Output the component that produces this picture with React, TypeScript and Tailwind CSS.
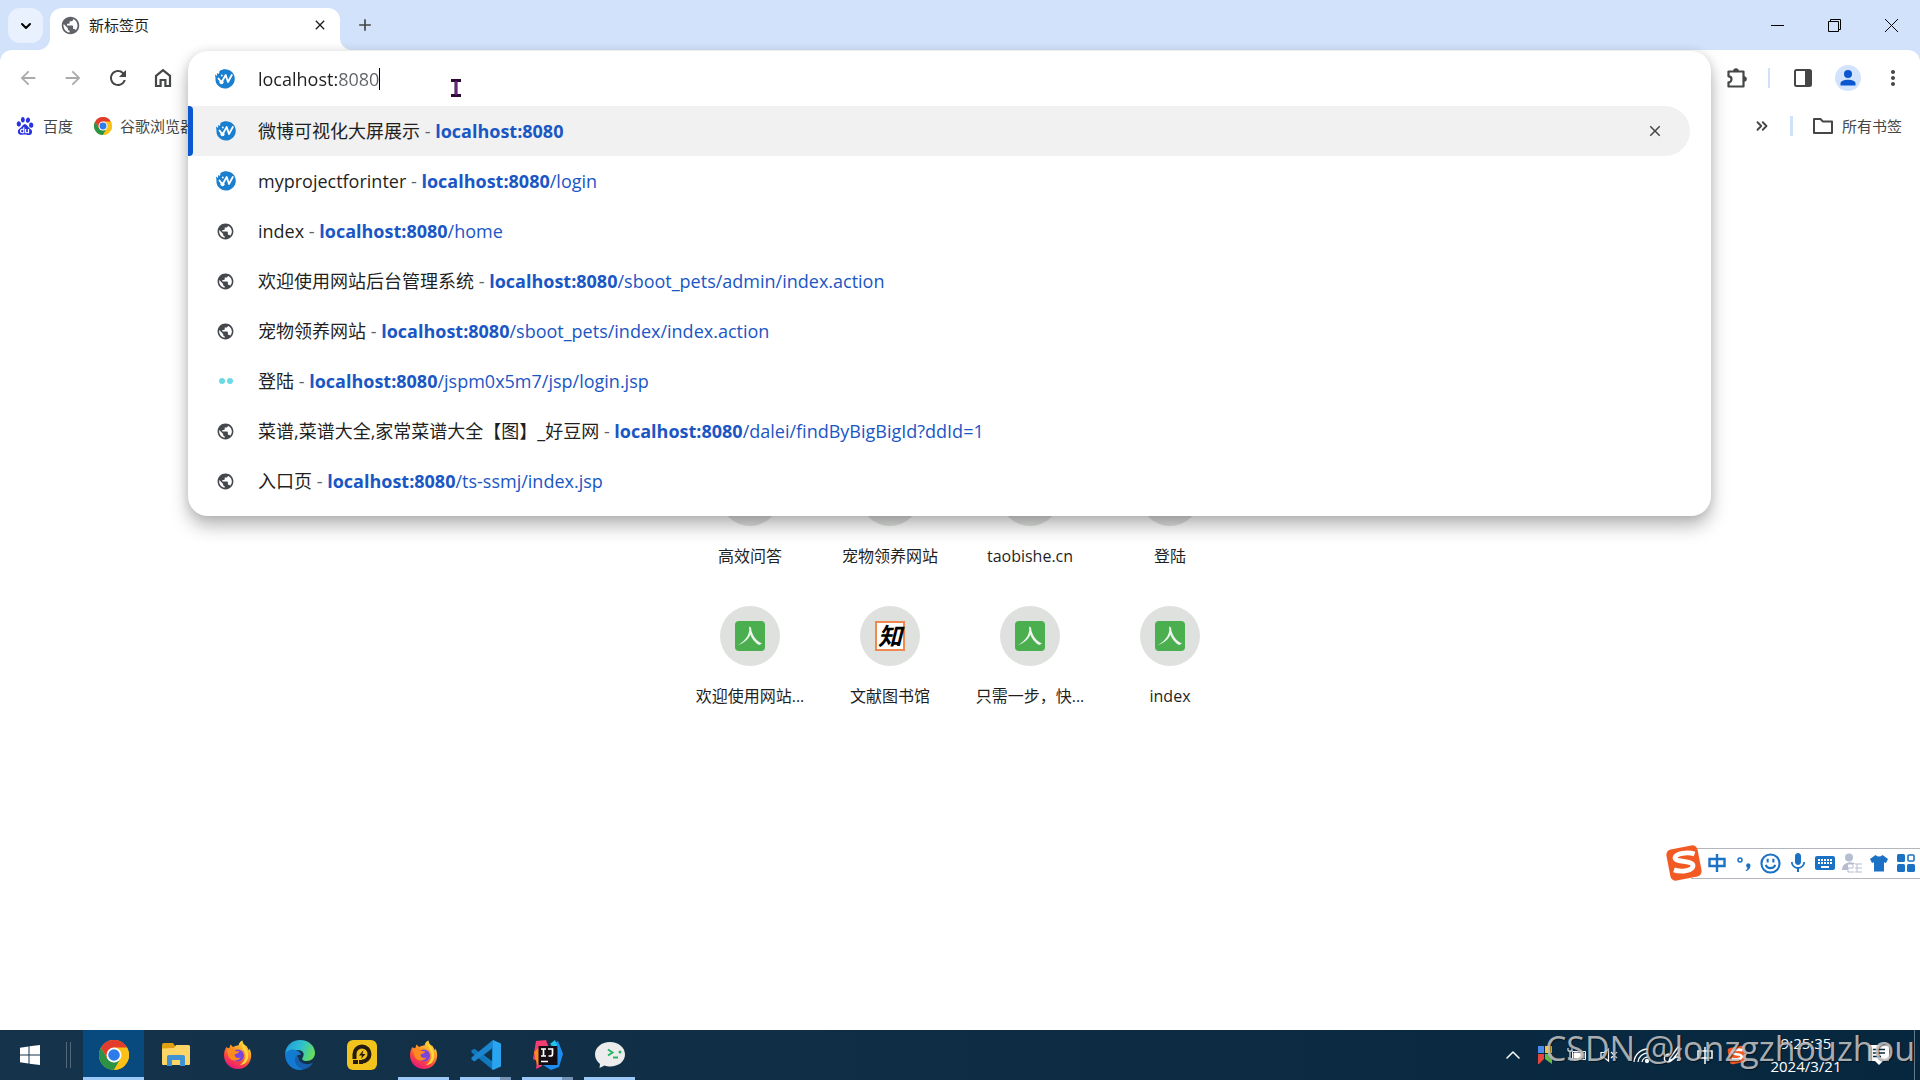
import type { ReactNode } from 'react';
import { MdArrowBack, MdArrowForward, MdAdd, MdClose, MdKeyboard, MdMic, MdMoreVert, MdPublic, MdRefresh } from 'react-icons/md';
import { SiBaidu } from 'react-icons/si';
import { ChevronDown, ChevronUp, ChevronsRight } from 'lucide-react';

const ChromeIcon = ({ className }: { className: string }) => (
  <svg viewBox="0 0 48 48" className={className}>
    <circle cx="24" cy="24" r="24" fill="#fbc116" />
    <path d="M3.2 12L13.6 30 24 36 34.4 30 24 48A24 24 0 0 1 3.2 12z" fill="#2b9246" />
    <path d="M24 12h20.8A24 24 0 0 1 24 48l10.4-18z" fill="#fbc116" />
    <path d="M3.2 12A24 24 0 0 1 44.8 12H24L13.6 30z" fill="#e33b2e" />
    <circle cx="24" cy="24" r="12" fill="#fff" />
    <circle cx="24" cy="24" r="9.3" fill="#2e7bea" />
  </svg>
);

const WeiboIcon = () => (
  <svg viewBox="0 0 20 20" className="size-5">
    <path d="M4.500 2C8-.5 13.500-.5 17 3c4 4 3.600 10.500-.5 14-4 3.600-10 3.300-13.500-.4C1 14.500 .2 12 .5 9.500L0 5.500l2 1.500.2-3 1.800 1z" fill="#1b7fd0" />
    <path d="M3.500 9.500L6.500 13.500 10.700 6 13 13 16.800 6" fill="none" stroke="#fff" strokeWidth="1.800" strokeLinejoin="round" strokeLinecap="round" />
    <circle cx="6.500" cy="13.200" r="2" fill="#fff" />
    <circle cx="6.800" cy="6.500" r=".9" fill="#fff" />
  </svg>
);

const GlobeIcon = () => <MdPublic className="size-[19px] text-[#45484c]" />;

const DotsIcon = () => (
  <svg viewBox="0 0 20 20" className="size-5">
    <circle cx="6" cy="10" r="3" fill="#6adbe5" />
    <circle cx="14" cy="10" r="3" fill="#6adbe5" />
  </svg>
);

const SogouIcon = ({ className }: { className: string }) => (
  <svg viewBox="0 0 36 36" className={className}>
    <rect x="3" y="3" width="30" height="30" rx="5" fill="#f15a22" transform="rotate(-11 18 18)" />
    <path d="M28 9.500C21 7 10 9 9.500 13c0 4.500 17 2.500 17 7.500 0 4.500-11 6.500-18 4" fill="none" stroke="#fff" strokeWidth="4.600" />
  </svg>
);

const HomeIcon = () => (
  <svg viewBox="0 0 20 20" className="size-5" fill="none" stroke="#444746" strokeWidth="2.200">
    <path d="M3 7.800L10 2.200l7 5.600V18h-4.600v-6H7.600v6H3z" />
  </svg>
);

const PuzzleIcon = () => (
  <svg viewBox="0 0 22 22" className="size-[22px]">
    <path d="M2.500 4.500h15v15h-15v-4.200a3 3 0 0 0 0-6z" fill="none" stroke="#444746" strokeWidth="2.200" strokeLinejoin="round" />
    <path d="M7.200 4a2.800 2.800 0 0 1 5.600 0zM18 9.200a2.800 2.800 0 0 1 0 5.600z" fill="#444746" />
  </svg>
);

const SidePanelIcon = () => (
  <svg viewBox="0 0 20 20" className="size-5">
    <rect x="2" y="2" width="16" height="16" rx="1.500" fill="none" stroke="#444746" strokeWidth="2" />
    <path d="M12 2h6v16h-6z" fill="#444746" />
  </svg>
);

const FolderIcon = () => (
  <svg viewBox="0 0 22 18" className="h-[18px] w-[22px]" fill="none" stroke="#444746" strokeWidth="2" strokeLinejoin="round">
    <path d="M2 2h6.500l2.500 2.600h9V16H2z" />
  </svg>
);

const FileExplorerIcon = () => (
  <svg viewBox="0 0 30 30" className="size-[30px]">
    <path d="M1 5q0-2 2-2h9l2 3v3H1z" fill="#e0a010" />
    <path d="M1 8.500l12-.5 2-3h12.500q1.500 0 1.500 1.500V24q0 1-1 1H2q-1 0-1-1z" fill="#fdd667" />
    <path d="M6 26V17q0-2 2-2h14q2 0 2 2v9h-5v-6h-8v6z" fill="#3f93d2" />
  </svg>
);

const FirefoxIcon = () => (
  <svg viewBox="0 0 30 30" className="size-[30px]">
    <defs>
      <linearGradient id="fx" x1=".8" y1="0" x2=".3" y2="1">
        <stop offset="0" stopColor="#ffe93c" />
        <stop offset=".4" stopColor="#ff9527" />
        <stop offset=".7" stopColor="#fb4343" />
        <stop offset="1" stopColor="#e51580" />
      </linearGradient>
    </defs>
    <path d="M3.500 7L6 9l1.500-4.500L10 7q3-2 5.500-1.500C16 2.500 18 1 19.500.5c0 3 2 4.500 4 5.500l2.500 4.500.5-2c1.500 3 2 6 1.500 9C27 24.500 21.500 29 15 29 7 29 1 23 1 15c0-3 1-6 2.500-8z" fill="url(#fx)" />
    <path d="M19 4c4 3 7 8 6 14-1 5-5 7-8 7 6-4 7-11 3-16z" fill="#ffd83a" />
    <circle cx="15" cy="15.500" r="6" fill="#7a45dc" />
    <path d="M3.500 9C7 7 11 8.500 12.500 11l4 .5c-1 2-3.500 2-5 3 0 3 3 4 6 3-2 4-10 4-12-1z" fill="#ff8a1f" />
  </svg>
);

const EdgeIcon = () => (
  <svg viewBox="0 0 30 30" className="size-[30px]">
    <defs>
      <linearGradient id="edge" x1="0" y1=".3" x2="1" y2=".6">
        <stop offset="0" stopColor="#239cdc" />
        <stop offset=".5" stopColor="#2fc0cf" />
        <stop offset="1" stopColor="#68df54" />
      </linearGradient>
    </defs>
    <path d="M0 14C1 5 7.500 0 15 0c9 0 15 6 15 13 0 5-4 8-8.500 8-3.500 0-5-1.500-4-3 3-5 0-8-5-8C7 10 2 12 0 14z" fill="url(#edge)" />
    <path d="M0 14c2-4 7-5.500 11-4 3 1 5 3 5 5-3-1-6 2-5 6 1 5 5 7 8 8.500C8 32 0 24 0 14z" fill="#127bd1" />
    <path d="M11.500 15c-4 6 0 13 7.500 14.300 4-1 7-3 9-6.500-5 3-14 1-14.500-5z" fill="#155fae" />
  </svg>
);

const PlayerIcon = () => (
  <svg viewBox="0 0 30 30" className="size-[30px]">
    <rect width="30" height="30" rx="6" fill="#f2c31d" />
    <path d="M7.500 19v-5a7.500 7.500 0 1 1 7.500 7.500" fill="none" stroke="#241c10" strokeWidth="4" />
    <path d="M6 20h5v4H6zM12 20h4v4h-4zM16.500 10L12 15.500h3l-1 3.500 4.500-5h-3z" fill="#241c10" />
  </svg>
);

const CodeIcon = () => (
  <svg viewBox="0 0 30 30" className="size-[30px]">
    <path d="M22 0L8.500 12.500 3.500 8.700.5 10.200v2.300L22 30z" fill="#1178bd" />
    <path d="M.5 19.500l3 2L22 7V0L.5 17.500z" fill="#1b86cf" />
    <path d="M22 0l8 3.500v23L22 30l-1-1V8.500L12 15l9 7v7z" fill="#2aa4ee" />
    <path d="M21 8.500L12.500 15l8.500 6.500z" fill="#12334a" />
  </svg>
);

const IdeaIcon = () => (
  <svg viewBox="0 0 30 30" className="size-[30px]">
    <path d="M3 1l10-1 3 8-7 18-6 3 1-8-4-2z" fill="#f33d72" />
    <path d="M1 12l7-6 2 17-6 2z" fill="#fb8a25" />
    <path d="M18 5l7-4 5 13-4 13-8 3-8-5z" fill="#1d8cf0" />
    <path d="M17 4l5-4 4 10z" fill="#21c6e8" />
    <rect x="5.500" y="6" width="19" height="19" fill="#140d14" />
    <path d="M8 9h5M10.500 9v7M8 16h5M15 9h4.500v5q0 2-2 2h-2M8 21.500h7" fill="none" stroke="#fff" strokeWidth="1.700" />
  </svg>
);

const WechatDevIcon = () => (
  <svg viewBox="0 0 30 30" className="size-[30px]">
    <path d="M15 2C6.500 2 0 7.500 0 14.500c0 4 2 7 5 9.500L4.500 28l5-2.500c2 .6 3.500 1 5.500 1 8.500 0 15-5 15-12S23.500 2 15 2z" fill="#ececec" />
    <path d="M13 9.500l4.500 3-4.500 3M18 17.500h5" fill="none" stroke="#27b565" strokeWidth="2" />
    <circle cx="25" cy="12" r="1.500" fill="#27b565" />
  </svg>
);

type Suggestion = { title: string; path: string; icon: ReactNode; selected?: boolean };

const suggestions: Suggestion[] = [
  { title: '微博可视化大屏展示', path: '', icon: <WeiboIcon />, selected: true },
  { title: 'myprojectforinter', path: '/login', icon: <WeiboIcon /> },
  { title: 'index', path: '/home', icon: <GlobeIcon /> },
  { title: '欢迎使用网站后台管理系统', path: '/sboot_pets/admin/index.action', icon: <GlobeIcon /> },
  { title: '宠物领养网站', path: '/sboot_pets/index/index.action', icon: <GlobeIcon /> },
  { title: '登陆', path: '/jspm0x5m7/jsp/login.jsp', icon: <DotsIcon /> },
  { title: '菜谱,菜谱大全,家常菜谱大全【图】_好豆网', path: '/dalei/findByBigBigId?ddId=1', icon: <GlobeIcon /> },
  { title: '入口页', path: '/ts-ssmj/index.jsp', icon: <GlobeIcon /> },
];

const RenIcon = () => (
  <svg viewBox="0 0 30 30" className="size-[30px]">
    <rect width="30" height="30" rx="4" fill="#4bae4f" />
    <path d="M14 5.500c1.500 7-3 14-11 18.500C9 22 14 18 15.300 13.500 17 18.500 21 22.500 24 24l3-1.500c-5-2-10.500-8-11-16z" fill="#eef3ee" />
  </svg>
);

const ZhiIcon = () => (
  <span className="flex size-[30px] items-center justify-center border-2 border-[#ef8a4e] bg-white text-2xl leading-none font-bold text-black italic">
    知
  </span>
);

const shortcuts = [
  { label: '高效问答', icon: null },
  { label: '宠物领养网站', icon: null },
  { label: 'taobishe.cn', icon: null },
  { label: '登陆', icon: null },
  { label: '欢迎使用网站...', icon: <RenIcon /> },
  { label: '文献图书馆', icon: <ZhiIcon /> },
  { label: '只需一步，快...', icon: <RenIcon /> },
  { label: 'index', icon: <RenIcon /> },
];

function TabStrip() {
  return (
    <header className="flex h-[50px] shrink-0 items-start bg-[#d3e2fb] pt-2">
      <button aria-label="Search tabs" className="ml-2 flex size-[35px] items-center justify-center rounded-xl bg-[#e9f1fe]">
        <ChevronDown className="size-4" strokeWidth={3} />
      </button>
      <div className="relative ml-[7px] flex h-[42px] w-[290px] items-center rounded-t-xl bg-white pr-3 pb-2 pl-[10px]">
        <svg viewBox="0 0 12 12" className="absolute bottom-0 -left-3 size-3 fill-white"><path d="M12 0v12H0A12 12 0 0 0 12 0z" /></svg>
        <svg viewBox="0 0 12 12" className="absolute -right-3 bottom-0 size-3 fill-white"><path d="M0 0v12h12A12 12 0 0 1 0 0z" /></svg>
        <MdPublic className="size-[21px] text-[#5f6368]" />
        <span className="ml-2 flex-1 text-[15px] text-[#1f1f1f]">新标签页</span>
        <button aria-label="Close tab"><MdClose className="size-4 text-[#1f1f1f]" /></button>
      </div>
      <button aria-label="New tab" className="ml-[15px] flex h-[34px] w-5 items-center justify-center">
        <MdAdd className="size-5 shrink-0 text-[#444746]" />
      </button>
      <div className="ml-auto flex h-[34px]">
        <button aria-label="Minimize" className="flex w-[57px] items-center justify-center"><span className="h-px w-[13px] bg-black" /></button>
        <button aria-label="Restore" className="flex w-[57px] items-center justify-center">
          <svg viewBox="0 0 13 13" className="size-[13px]" fill="none" stroke="#000"><path d="M.5 2.500h10v10H.5zM2.500 2.500v-2h10v10h-2" /></svg>
        </button>
        <button aria-label="Close" className="flex w-[57px] items-center justify-center">
          <svg viewBox="0 0 13 13" className="size-[13px]" stroke="#000"><path d="M0 0l13 13M13 0L0 13" /></svg>
        </button>
      </div>
    </header>
  );
}

function SuggestionRow({ title, path, icon, selected }: Suggestion) {
  return (
    <li className={`relative mr-[21px] flex h-[50px] items-center rounded-r-full pr-[26px] ${selected ? 'bg-[#f1f1f1]' : ''}`}>
      {selected && <span className="absolute inset-y-0 left-0 w-[5px] rounded-r bg-[#0b57d0]" />}
      <a href={`http://localhost:8080${path}`} className="flex flex-1 items-center text-lg whitespace-pre text-[#1f1f1f]">
        <span className="ml-7 flex w-[42px] items-center">{icon}</span>
        <span>{title}</span>
        <span className="text-[#5f6368]"> - </span>
        <span className="text-[#1a56c4]"><b className="font-bold">localhost:8080</b>{path}</span>
      </a>
      {selected && <button aria-label="Remove suggestion"><MdClose className="size-[18px] text-[#444746]" /></button>}
    </li>
  );
}

function Omnibox() {
  return (
    <div className="relative h-full flex-1">
      <div className="absolute inset-x-0 top-px z-10 rounded-[20px] bg-white pb-[10px] shadow-[0_10px_18px_rgba(0,0,0,0.28),0_0_10px_rgba(0,0,0,0.1)]">
        <label className="flex h-[55px] items-center pl-[27px]">
          <WeiboIcon />
          <input
            aria-label="Address and search bar"
            defaultValue="localhost:8080"
            className="ml-[23px] field-sizing-content bg-[linear-gradient(90deg,#1f1f1f_80px,#5f6368_80px)] bg-clip-text text-lg text-transparent outline-none"
          />
          <span className="h-[22px] w-px bg-black" />
        </label>
        <ul>
          {suggestions.map((item) => <SuggestionRow key={item.title} {...item} />)}
        </ul>
        {/* Text cursor */}
        <svg viewBox="0 0 12 18" className="absolute top-7 left-[262px] h-[18px] w-3" fill="none">
          <path d="M1 1.500h10M6 1.500v15M1 16.500h10" stroke="#2b0a35" strokeWidth="3" />
          <path d="M6 2v14" stroke="#a13ac4" strokeWidth="1" />
        </svg>
      </div>
    </div>
  );
}

function Toolbar() {
  return (
    <div className="flex h-14 items-center">
      <nav className="flex w-[188px] pl-[5px]">
        <button aria-label="Back" className="flex w-[45px] items-center justify-center"><MdArrowBack className="size-[22px] text-[#a8aaac]" /></button>
        <button aria-label="Forward" className="flex w-[45px] items-center justify-center"><MdArrowForward className="size-[22px] text-[#a8aaac]" /></button>
        <button aria-label="Reload" className="flex w-[45px] items-center justify-center"><MdRefresh className="size-6 text-[#444746]" /></button>
        <button aria-label="Home" className="flex w-[45px] items-center justify-center"><HomeIcon /></button>
      </nav>
      <Omnibox />
      <div className="flex w-[209px] items-center justify-end pr-[5px]">
        <button aria-label="Extensions" className="flex w-[45px] items-center justify-center"><PuzzleIcon /></button>
        <span className="mr-[10px] ml-[9px] h-5 w-0.5 bg-[#d0e1fd]" />
        <button aria-label="Side panel" className="flex w-[45px] items-center justify-center"><SidePanelIcon /></button>
        <button aria-label="Profile" className="flex w-[45px] items-center justify-center">
          <svg viewBox="0 0 26 26" className="size-[26px]">
            <circle cx="13" cy="13" r="13" fill="#d3e3fd" />
            <circle cx="13" cy="9" r="4" fill="#0b57d0" />
            <path d="M5.500 20.500v-2c0-5 15-5 15 0v2z" fill="#0b57d0" />
          </svg>
        </button>
        <button aria-label="Menu" className="flex w-[45px] items-center justify-center"><MdMoreVert className="size-6 text-[#444746]" /></button>
      </div>
    </div>
  );
}

function BookmarksBar() {
  return (
    <nav className="flex h-10 items-center pr-[18px] pl-4 text-[15px] text-[#444746]">
      <a href="#baidu" className="flex items-center">
        <SiBaidu className="size-[18px] text-[#2932e1]" />
        <span className="ml-[9px]">百度</span>
      </a>
      <a href="#chrome" className="ml-[21px] flex items-center">
        <ChromeIcon className="size-[18px]" />
        <span className="ml-2">谷歌浏览器</span>
      </a>
      <button aria-label="More bookmarks" className="ml-auto"><ChevronsRight className="size-[18px]" strokeWidth={2.5} /></button>
      <span className="mx-[19px] h-5 w-[3px] bg-[#d0e1fd]" />
      <button className="flex items-center gap-2"><FolderIcon />所有书签</button>
    </nav>
  );
}

function Shortcuts() {
  return (
    <main className="flex flex-1 justify-center pt-80">
      <div className="grid h-[280px] grid-cols-[repeat(4,140px)]">
        {shortcuts.map(({ label, icon }) => (
          <a key={label} href="#site" className="flex h-[140px] flex-col items-center text-base text-[#1f1f1f]">
            <span className="flex size-[60px] items-center justify-center rounded-full bg-[#dfe1df]">{icon}</span>
            <span className="mt-[18px] leading-6">{label}</span>
          </a>
        ))}
      </div>
    </main>
  );
}

function ImeBar() {
  return (
    <div className="absolute right-0 bottom-[200px] flex h-[34px] items-center text-[#1b72c4]">
      <SogouIcon className="z-10 size-[38px]" />
      <div className="-ml-3 flex h-[31px] items-center border-y border-[#b4b6bd] bg-white pr-px pl-3">
        <span className="flex w-[27px] justify-center">
          <svg viewBox="0 0 18 18" className="size-[18px]" fill="none" stroke="currentColor" strokeWidth="2.400"><path d="M1.500 5h15v7h-15zM9 0v18" /></svg>
        </span>
        <span className="flex w-[27px] justify-center">
          <svg viewBox="0 0 16 16" className="size-4" fill="currentColor"><circle cx="4" cy="5" r="2" fill="none" stroke="currentColor" strokeWidth="1.500" /><path d="M9.500 15.500c1.500-1 2-2 1.800-3a2.200 2.200 0 1 1 3.200-2.200c0 3-2 5-4.500 6z" /></svg>
        </span>
        <span className="flex w-[27px] justify-center">
          <svg viewBox="0 0 22 22" className="size-[21px]" fill="none" stroke="currentColor" strokeWidth="2.200"><circle cx="11" cy="11" r="9.500" /><path d="M8 6v4M14 6v4M6 12.500c1.500 4.500 8.500 4.500 10 0" /></svg>
        </span>
        <span className="flex w-[27px] justify-center"><MdMic className="size-6" /></span>
        <span className="flex w-[27px] justify-center"><MdKeyboard className="size-6" /></span>
        <span className="flex w-[27px] justify-center">
          <svg viewBox="0 0 22 20" className="h-5 w-[22px] text-[#b5bdd0]"><circle cx="8" cy="4.500" r="4" fill="currentColor" /><path d="M1 17c0-9 12-9 13-6H7v6z" fill="currentColor" /><path d="M7 11h5v4H7v4h6M14 11h7M14 15h7M14 19h7M16 11v8" fill="none" stroke="currentColor" /></svg>
        </span>
        <span className="flex w-[27px] justify-center">
          <svg viewBox="0 0 18 18" className="size-[18px] fill-current"><path d="M5.500 1q3.500 3 7 0l5.500 4-2 4-2-.8V17.500H4V8.200L2 9 0 5z" /></svg>
        </span>
        <span className="flex w-[27px] justify-center">
          <svg viewBox="0 0 18 18" className="size-[18px] fill-current"><rect width="8" height="8" rx="1.500" /><rect y="10" width="8" height="8" rx="1.500" /><rect x="10" y="10" width="8" height="8" rx="1.500" /><rect x="11" y="1" width="6" height="6" rx="1" fill="none" stroke="currentColor" strokeWidth="1.600" /></svg>
        </span>
      </div>
    </div>
  );
}

const taskbarApps = [
  { name: 'Chrome', icon: <ChromeIcon className="size-[30px]" />, state: 'active' },
  { name: 'File Explorer', icon: <FileExplorerIcon />, state: 'idle' },
  { name: 'Firefox', icon: <FirefoxIcon />, state: 'idle' },
  { name: 'Edge', icon: <EdgeIcon />, state: 'idle' },
  { name: 'Player', icon: <PlayerIcon />, state: 'idle' },
  { name: 'Firefox Developer', icon: <FirefoxIcon />, state: 'open' },
  { name: 'VS Code', icon: <CodeIcon />, state: 'stacked' },
  { name: 'IntelliJ IDEA', icon: <IdeaIcon />, state: 'stacked' },
  { name: 'WeChat DevTools', icon: <WechatDevIcon />, state: 'open' },
];

const trayIcons: { name: string; icon: ReactNode }[] = [
  { name: 'Hidden icons', icon: <ChevronUp className="size-6" strokeWidth={1.5} /> },
  { name: 'Security', icon: <svg viewBox="0 0 14 18" className="h-[18px] w-3.5"><path d="M0 0h6v7H0z" fill="#4b8bf0" /><path d="M7 0h7v7H7z" fill="#f0c22b" /><path d="M0 8h6v5l-5 5H0z" fill="#e8453c" /><path d="M7 8h7v10l-7-5z" fill="#6cb644" /></svg> },
  { name: 'Battery', icon: <svg viewBox="0 0 20 16" className="h-4 w-5" fill="none" stroke="#fff"><path d="M5.500 4.500h13v8h-13z" /><path d="M7 6h10v5H7z" fill="#fff" /><path d="M1 1v3h4V1M3 4v8h2" /></svg> },
  { name: 'Volume', icon: <svg viewBox="0 0 18 16" className="h-4 w-[18px]" fill="none" stroke="#fff" strokeWidth="1.200"><path d="M1 5.500h3L8.500 2v12L4 10.500H1zM11 5l6 6M17 5l-6 6" /></svg> },
  { name: 'Network', icon: <svg viewBox="0 0 18 18" className="size-[18px]" fill="none" stroke="#fff" strokeWidth="1.300"><path d="M2 16A14 14 0 0 1 16 3M6 16A10 10 0 0 1 16 7M10 16a6 6 0 0 1 6-5" /><circle cx="15" cy="15" r="1.500" fill="#fff" /></svg> },
  { name: 'Pen', icon: <svg viewBox="0 0 20 18" className="h-[18px] w-5" fill="none" stroke="#fff" strokeWidth="1.400"><path d="M7 12L15 1l3 2-8 10-4 2zM6 8c-6 1-6 8-1 8 5 0 6-6 10-5 5 1 2 4-1 3" /></svg> },
  { name: 'Input language', icon: <svg viewBox="0 0 16 18" className="h-[18px] w-4" fill="none" stroke="#fff" strokeWidth="1.500"><path d="M1 5h14v7H1zM8 1v17" /></svg> },
  { name: 'Sogou', icon: <SogouIcon className="size-5" /> },
];

function Taskbar() {
  return (
    <footer className="relative flex h-[50px] shrink-0 bg-linear-to-r from-[#15344b] to-[#07273f] text-white">
      <button aria-label="Start" className="flex w-[60px] items-center justify-center">
        <svg viewBox="0 0 20 20" className="size-5 fill-white"><path d="M0 2.700L8.500 1.500v8H0zM9.500 1.300L20 0v9.500H9.500zM0 10.500h8.500v8L0 17.300zM9.500 10.500H20V20L9.500 18.700z" /></svg>
      </button>
      <span className="mt-3 mr-3 ml-[6px] h-[26px] w-[5px] border-x border-[#53697b]" />
      {taskbarApps.map(({ name, icon, state }) => (
        <button
          key={name}
          aria-label={name}
          className={`relative mr-px flex w-[61px] items-center justify-center ${state === 'active' ? 'bg-[#084a7e]' : ''}`}
        >
          {icon}
          {state === 'active' && <span className="absolute inset-x-0 bottom-0 h-[3px] bg-[#9cc9f7]" />}
          {state === 'open' && <span className="absolute inset-x-[5px] bottom-0 h-[3px] bg-[#9cc9f7]" />}
          {state === 'stacked' && <span className="absolute inset-x-[5px] bottom-0 h-[3px] border-r-[11px] border-[#7594b5] bg-[#9cc9f7]" />}
        </button>
      ))}
      <div className="ml-auto flex items-center">
        {trayIcons.map(({ name, icon }) => (
          <button key={name} aria-label={name} className="flex w-8 justify-center">{icon}</button>
        ))}
        <time className="flex w-[106px] flex-col text-center text-[15px] leading-[23px]">
          <span>9:25:35</span>
          <span>2024/3/21</span>
        </time>
        <button aria-label="Notifications" className="flex w-10 justify-center">
          <svg viewBox="0 0 20 20" className="size-5"><path d="M0 0h20v16h-6l-4 4-4-4H0z" fill="#fff" /><path d="M4 4.500h12M4 8h12M4 11.500h8" stroke="#0a2a42" strokeWidth="1.400" /></svg>
        </button>
        <span className="ml-[15px] h-[50px] w-[6px] border-l border-[#64798a]" />
      </div>
      <p className="pointer-events-none absolute top-0 right-[5px] text-[34px] leading-9 whitespace-nowrap text-[#c6c8ca]/85 text-shadow-[1px_1px_1px_rgba(0,0,0,0.5)]">
        CSDN @lonzgzhouzhou
      </p>
    </footer>
  );
}

export default function App() {
  return (
    <div className="relative flex min-h-screen flex-col bg-[#d3e2fb] font-['Open_Sans','Noto_Sans_CJK_SC',sans-serif]">
      <TabStrip />
      <div className="flex flex-1 flex-col rounded-t-xl bg-white">
        <Toolbar />
        <BookmarksBar />
        <Shortcuts />
      </div>
      <ImeBar />
      <Taskbar />
    </div>
  );
}
